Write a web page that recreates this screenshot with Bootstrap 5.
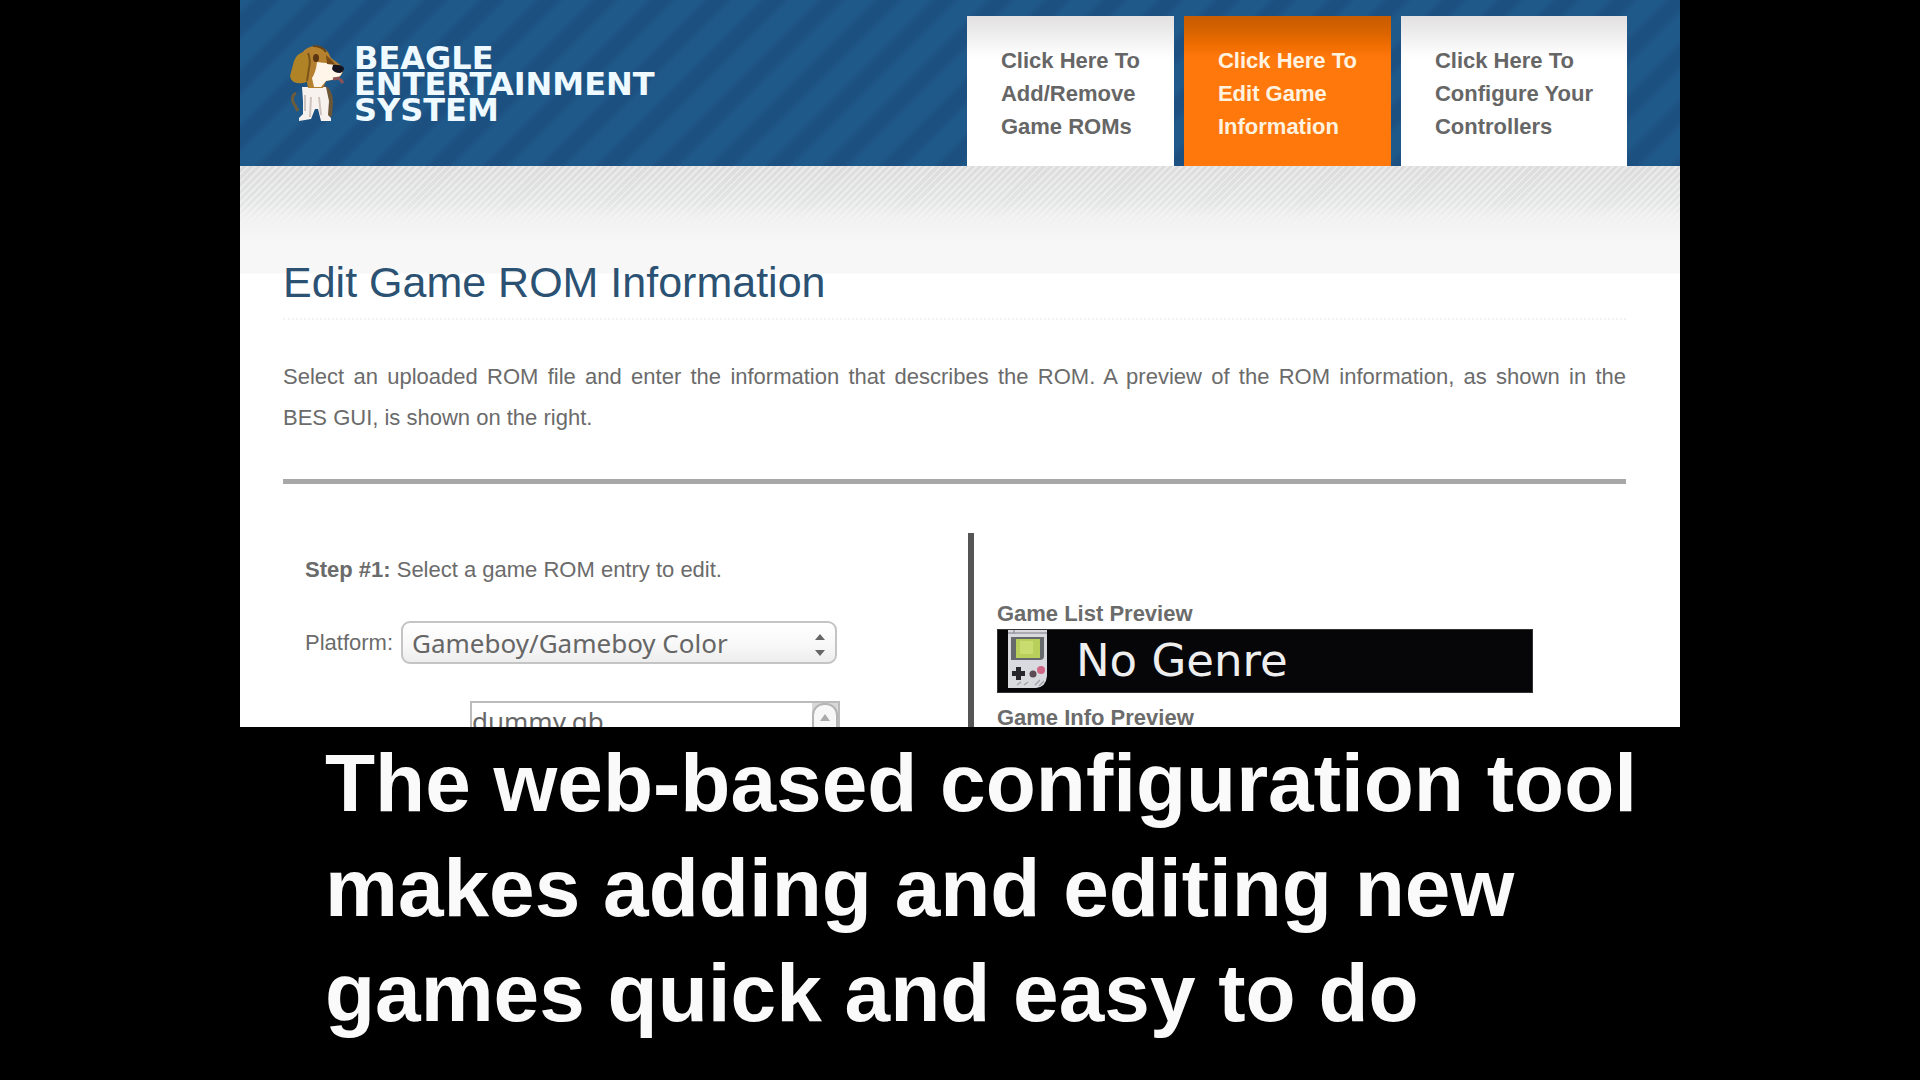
<!DOCTYPE html>
<html lang="en">
<head>
<meta charset="utf-8">
<meta name="viewport" content="width=device-width, initial-scale=1">
<title>Beagle Entertainment System</title>
<link href="https://cdn.jsdelivr.net/npm/bootstrap@5.3.0/dist/css/bootstrap.min.css" rel="stylesheet">
<style>
  body { background: #000; color: #6b6b6b; font: 22px/33px "Liberation Sans", Arial, sans-serif; }
  .frame { width: 75%; }
  .shot { min-height: 0; background: #fff; }
  .top-bar { height: 166px; padding-right: 53px; padding-left: 48px;
    background: repeating-linear-gradient(135deg, #1f598a 0 6px, #1c5080 13px 23px, #1f598a 30px 40px); }
  .brand { color: #eefaff; font: bold 32px/26px "DejaVu Sans", sans-serif; margin-top: 45px; }
  .brand:hover { color: #fff; }
  .tab-row { gap: 10px; }
  .tab-link { height: 150px; padding: 28px 34px 0; color: #666; font-weight: bold; text-decoration: none;
    background: linear-gradient(#e2e0e0, #f2f2f2 24px, #fff 42px); }
  .tab-link.active { color: #fff3e0;
    background: linear-gradient(#c85c00, #d66200 14px, #ee6c00 28px, #ff780c 42px); }
  .page-body { padding: 92px 54px 0 43px;
    background:
      linear-gradient(to bottom, transparent 40px, #f3f3f3 60px, #f7f7f7 75px 107px, #fff 108px),
      repeating-linear-gradient(135deg, rgba(255,255,255,.4) 0 2px, transparent 2px 5px),
      linear-gradient(#dcdcdc, #e2e3e3 30px, #efefef 60px, #fff 108px); }
  .page-title { color: #2c5273; font-size: 43px; line-height: 48px; border-bottom: 2px dotted #f2f2f2; padding-bottom: 12px; }
  .intro { line-height: 41px; text-align: justify; margin-top: 36px; }
  .rule { height: 5px; background: #a8a8a8; margin-top: 41px; }
  .split { margin-top: 49px; }
  .pane-left { flex: 0 0 51%; padding: 20px 0 0 22px; }
  .pane-right { flex: 0 0 49%; border-left: 6px solid #555; padding: 66px 93px 0 23px; }
  .platform-row { margin-top: 35px; }
  .picker { height: 43px; width: 436px; font: 26px/34px "Noto Sans", sans-serif; color: #666; border: 2px solid #c4c4c4;
    border-radius: 9px; padding: 2px 40px 2px 9px; appearance: none; background: transparent; }
  .picker-wrap { background: linear-gradient(#fff, #f9f9f9 50%, #ececec); border-radius: 9px; }
  .picker-arrows { right: 11px; top: 12px; pointer-events: none; }
  .rom-list { width: 370px; height: 160px; margin: 37px 0 0 165px; border: 2px solid #bbb; font: 26px/36px "Noto Sans", sans-serif; color: #666; }
  .rom-list select { border: 0; padding: 0; margin: 0; font: inherit; color: inherit; background: #fff; overflow: hidden; border-radius: 0; outline: 0; }
  .rom-list option { padding: 0; line-height: 36px; min-height: 36px; }
  .scroll-track { width: 26px; background: #d8d8d8; }
  .scroll-up { height: 40px; border: 2px solid #b5b5b5; border-radius: 12px 12px 0 0; background: #f7f7f7; }
  .preview-title { font-size: 22px; line-height: 30px; font-weight: bold; color: #6b6b6b; }
  .genre-strip { height: 64px; background: #060508; color: #eee; font: 45px/62px "DejaVu Sans", sans-serif; padding-left: 10px; border: 1px solid #333; }
  .info-title { margin-top: 10px; }
  .caption-text { color: #fafafa; font-size: 82px; line-height: 105px; font-weight: bold; padding: 3px 0 35px 85px; }
</style>
<script src="https://cdn.jsdelivr.net/npm/bootstrap@5.3.0/dist/js/bootstrap.bundle.min.js"></script>
</head>
<body>
<div class="frame mx-auto vh-100 d-flex flex-column overflow-hidden">
  <main class="shot flex-fill overflow-hidden">
    <header class="top-bar d-flex justify-content-between align-items-start">
      <a class="brand d-flex text-decoration-none" href="#">
        <svg class="me-2 flex-shrink-0" width="58" height="78" viewBox="0 0 58 78" aria-hidden="true">
          <path d="M8 48q-5 3-3 9l5 9" fill="none" stroke="#6d5c3c" stroke-width="3"/>
          <path d="M36 40q9 4 9 17l-1 14-6 2z" fill="#6b5738"/>
          <path d="M14 42h24l3 14-1 14 3 3v3H33l-3-12h-3l-4 10-12 2v-3l4-4V56z" fill="#f8f2ee"/>
          <path d="M17 50v16M23 52l-1 20M31 52l2 18" stroke="#cfc3bd" stroke-width="2" fill="none"/>
          <path d="M14 8Q19 1 28 1q11 1 15 12l8 6q5 3 4 8-3 8-17 9l-3 7H20z" fill="#b5812f"/>
          <path d="M29 17q6 1 10 1l10 2q6 3 5 8-2 6-16 8l-5 6H26l-2-9q4-6 5-16z" fill="#fff5e8"/>
          <path d="M38 10q6 5 10 10l-9-1z" fill="#7b4a16"/>
          <path d="M16 7Q9 8 6 16L2 31q1 6 7 7 9 1 11-3l2-15q0-9-6-13z" fill="#b08326"/>
          <path d="M20 8q3 7 1 15l-2 13" fill="none" stroke="#7b5518" stroke-width="2"/>
          <path d="M25 1q9 0 13 6" fill="none" stroke="#6a4518" stroke-width="2"/>
          <ellipse cx="28" cy="13" rx="3" ry="4" fill="#5b3512"/>
          <path d="M45 20q8-1 11 3 0 4-4 5-6 0-8-4z" fill="#151420"/>
          <path d="M45 34l7-1M52 34l3 4" stroke="#8e5357" stroke-width="3"/>
        </svg>
        <span>BEAGLE<br>ENTERTAINMENT<br>SYSTEM</span>
      </a>
      <nav class="tab-row d-flex pt-3 ps-3 text-nowrap" aria-label="Tools">
        <a class="tab-link" href="#">Click Here To<br>Add/Remove<br>Game ROMs</a>
        <a class="tab-link active" href="#" aria-current="page">Click Here To<br>Edit Game<br>Information</a>
        <a class="tab-link" href="#">Click Here To<br>Configure Your<br>Controllers</a>
      </nav>
    </header>
    <div class="page-body">
      <h1 class="page-title fw-normal mb-0">Edit Game ROM Information</h1>
      <p class="intro mb-0">Select an uploaded ROM file and enter the information that describes the ROM. A preview of the ROM information, as shown in the <span class="text-nowrap">BES GUI,</span> is shown on the right.</p>
      <div class="rule"></div>
      <div class="d-flex split">
        <section class="pane-left">
          <p class="mb-0"><strong>Step #1:</strong> Select a game ROM entry to edit.</p>
          <div class="platform-row d-flex align-items-center">
            <label class="me-2" for="platform">Platform:</label>
            <div class="picker-wrap position-relative">
              <select class="picker d-block" id="platform"><option>Gameboy/Gameboy Color</option></select>
              <svg class="picker-arrows position-absolute" width="12" height="24" viewBox="0 0 12 24" aria-hidden="true"><path d="M1 7l5-6 5 6zM1 17l5 6 5-6z" fill="#666"/></svg>
            </div>
          </div>
          <div class="rom-list d-flex">
            <select class="flex-fill" size="4" aria-label="Game ROM"><option>dummy.gb</option></select>
            <div class="scroll-track"><div class="scroll-up d-flex justify-content-center pt-2"><svg width="12" height="8" viewBox="0 0 12 8" aria-hidden="true"><path d="M1 8l5-7 5 7z" fill="#aaa"/></svg></div></div>
          </div>
        </section>
        <section class="pane-right">
          <h2 class="preview-title mb-0">Game List Preview</h2>
          <div class="genre-strip d-flex">
            <svg class="me-4 flex-shrink-0" width="40" height="60" viewBox="0 0 40 60" aria-hidden="true">
              <path d="M0 0h39v46q-1 11-11 12H0z" fill="#d9d9e0"/>
              <path d="M0 3h39M6 0v4" stroke="#9a9aa4" stroke-width="1.500"/>
              <path d="M3 7h33v19q0 4-4 4H3z" fill="#66696c"/>
              <rect x="8" y="9" width="24" height="19" fill="#b9cf5c"/>
              <path d="M12 11h13v13H12z" fill="#c8dc70"/>
              <path d="M4 41h4v-4h5v4h4v5h-4v4H8v-4H4z" fill="#26262c"/>
              <circle cx="25" cy="44" r="3.500" fill="#5c4a55"/><circle cx="33" cy="40" r="4" fill="#cf6685"/>
              <path d="M9 55l4-3M16 55l4-3M27 55l5-5M31 56l5-5" stroke="#a3a3ad" stroke-width="1.500"/>
            </svg>
            <span class="ps-1">No Genre</span>
          </div>
          <h2 class="preview-title info-title mb-0">Game Info Preview</h2>
        </section>
      </div>
    </div>
  </main>
  <p class="caption-text mb-0">The web-based configuration tool makes adding and editing new games quick and easy to do</p>
</div>
</body>
</html>
